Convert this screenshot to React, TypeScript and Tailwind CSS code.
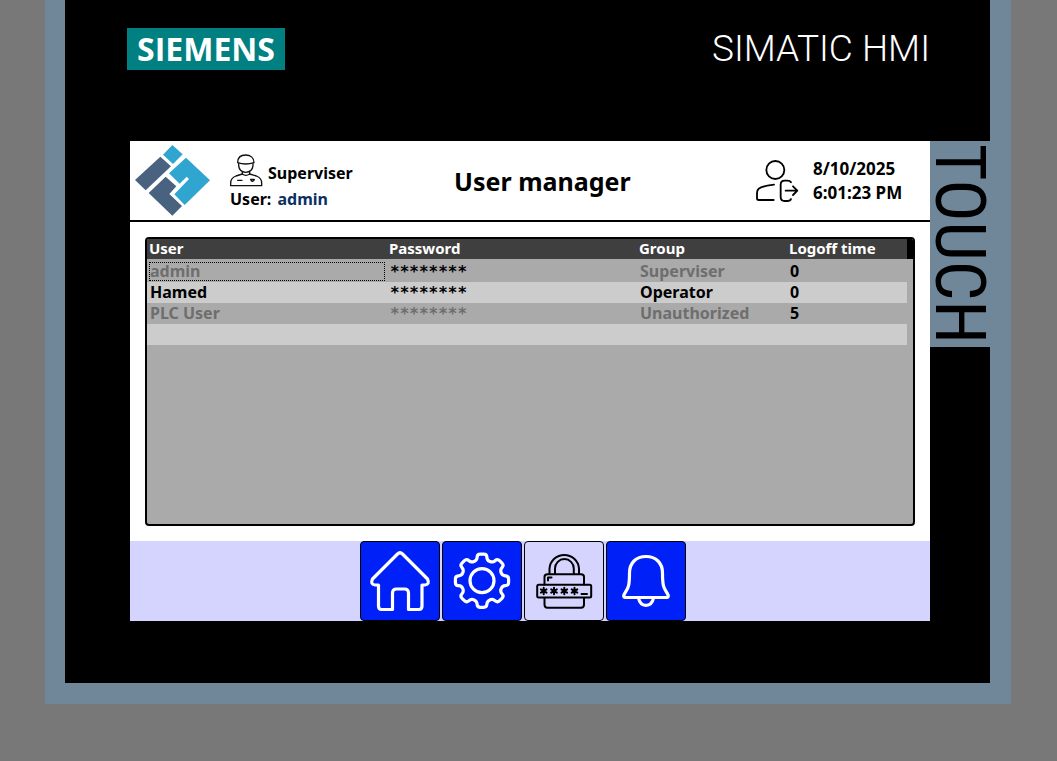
import type { ReactNode } from "react";

type UserRow = {
  name: string;
  group: string;
  logoff: number;
  nameClass: string;
  passwordClass: string;
  selected?: boolean;
};

const users: UserRow[] = [
  { name: "admin", group: "Superviser", logoff: 0, nameClass: "text-[#6e6e6e]", passwordClass: "text-black", selected: true },
  { name: "Hamed", group: "Operator", logoff: 0, nameClass: "text-black", passwordClass: "text-black" },
  { name: "PLC User", group: "Unauthorized", logoff: 5, nameClass: "text-[#6e6e6e]", passwordClass: "text-[#6e6e6e]" },
];

// Closed gear outline: eight teeth with rounded corners.
function gearPath(cx: number, cy: number, outer: number, root: number): string {
  const pts: [number, number][] = [];
  for (let i = 0; i < 8; i++) {
    const corners: [number, number][] = [[-10, outer], [10, outer], [14, root], [31, root]];
    for (const [offset, r] of corners) {
      const a = ((i * 45 - 90 + offset) * Math.PI) / 180;
      pts.push([cx + r * Math.cos(a), cy + r * Math.sin(a)]);
    }
  }
  const n = pts.length;
  const toward = (p: [number, number], q: [number, number]) => {
    const len = Math.hypot(q[0] - p[0], q[1] - p[1]);
    const d = Math.min(3, len / 2);
    return `${(p[0] + ((q[0] - p[0]) * d) / len).toFixed(2)} ${(p[1] + ((q[1] - p[1]) * d) / len).toFixed(2)}`;
  };
  return (
    pts
      .map((p, i) => {
        const prev = pts[(i + n - 1) % n];
        const next = pts[(i + 1) % n];
        return `${i ? "L" : "M"}${toward(p, prev)}Q${p[0].toFixed(2)} ${p[1].toFixed(2)} ${toward(p, next)}`;
      })
      .join("") + "Z"
  );
}

function Logo() {
  return (
    <svg viewBox="30 27 228 216" className="h-[72px] w-[76px] shrink-0" role="img" aria-label="Company logo">
      <path fill="#2fa5cf" d="M142 27 173 55 144 84 114 56Z" />
      <path fill="#48627f" d="M106 62 138 91 62 163 30 132Z" />
      <path fill="#2fa5cf" d="M183 65 255 133 179 207 148 175 192 129 185 122 164 143 132 112Z" />
      <path fill="#48627f" d="M122 122 154 151 133 174 171 210 142 239 71 171Z" />
    </svg>
  );
}

function WorkerIcon() {
  return (
    <svg viewBox="315 57 102 99" className="h-[33px] w-[34px] shrink-0" fill="none" stroke="#111" strokeWidth="4" strokeLinejoin="round" strokeLinecap="round" aria-hidden="true">
      <path d="M338 83C338 68 348 60 362 60S387 68 387 83Q375 87 362 87T338 83Z" />
      <path d="M341 86V92Q343 111 362 112 382 111 384 92V86" />
      <path d="M352 111V117L333 123Q317 129 317 144V152H410V144Q410 129 394 123L374 117V111M352 117Q362 125 374 117" />
      <path d="M338 136H351M377 133H388L386 137 382 139 379 137Z" />
    </svg>
  );
}

function LogoutIcon() {
  return (
    <svg viewBox="49 43 129 126" className="h-[42px] w-[43px]" fill="none" stroke="#000" strokeWidth="5.5" strokeLinecap="round" strokeLinejoin="round" aria-hidden="true">
      <circle cx="107" cy="73" r="27" />
      <path d="M103 117Q71 120 57 129 52 133 52 142V158Q52 163 57 163H102" />
      <path d="M154 110Q151 105 143 105H135Q123 105 123 117V154Q123 166 135 166H143Q152 166 154 160M138 135H172M160 122 173 135 160 148" />
    </svg>
  );
}

const homeIcon = (
  <path d="M37.5 13Q40 10.500 42.500 13L67.500 38Q70 43.500 65 44H62V65Q62 68.500 59 68.500H48.500V52Q48.500 48 44.500 48H36.500Q32.500 48 32.500 52V68.500H21.500Q18.500 68.500 18.500 65V44H15Q10 43.500 12.500 38Z" />
);

const gearIcon = (
  <>
    <path d={gearPath(40, 39.7, 27, 21)} />
    <circle cx="40" cy="39.700" r="12" />
  </>
);

const passwordIcon = (
  <>
    <path d="M25.500 33V27.500A14.800 14.800 0 0 1 55 27.500V33M31 33V27.500A9.400 9.400 0 0 1 49.800 27.500V33" />
    <path d="M20.500 43.500V36Q20.500 33.300 23.500 33.300H57Q60 33.300 60 36V43.500M20.500 57V63.500Q20.500 66.700 23.500 66.700H57Q60 66.700 60 63.500V57M24 39.500V36.500H27.500" />
    <rect x="13.200" y="43.700" width="54" height="12.800" rx="1.500" />
    {[19.7, 30, 40.3, 50.5].map((x) => (
      <path key={x} d={`M${x} 46.800V53.200M${x - 2.8} 48.400L${x + 2.8} 51.600M${x - 2.8} 51.600L${x + 2.8} 48.400`} />
    ))}
    <path d="M57.500 53H63" />
  </>
);

const bellIcon = (
  <>
    <path d="M23.500 32C23.500 22 30 15.500 40 15.500S56.500 22 56.500 32C56.500 46 58 47 61 52Q64 56.500 60 56.500H20Q16 56.500 19 52C22 47 23.500 46 23.500 32Z" />
    <path d="M32.500 57Q34 64.300 40 64.300T47.500 57" />
  </>
);

function NavButton({ label, active, children }: { label: string; active?: boolean; children: ReactNode }) {
  return (
    <button
      type="button"
      aria-label={label}
      aria-current={active ? "page" : undefined}
      className={`size-20 rounded border border-black ${active ? "bg-[#d5d4ff] text-black" : "bg-[#0020f8] text-white"}`}
    >
      <svg viewBox="1 1 78 78" className="size-full" fill="none" stroke="currentColor" strokeWidth={active ? 2 : 3.2} strokeLinecap="round" strokeLinejoin="round" aria-hidden="true">
        {children}
      </svg>
    </button>
  );
}

function UserTable() {
  return (
    <div className="min-h-[289px] overflow-hidden rounded border-2 border-black bg-[#aaaaaa]">
      <table className="w-full table-fixed border-collapse text-left text-base leading-[19px] font-bold">
        <colgroup>
          <col className="w-[240px]" />
          <col className="w-[250px]" />
          <col className="w-[150px]" />
          <col />
          <col className="w-[6px]" />
        </colgroup>
        <thead>
          <tr className="h-5 bg-[#3f3f3f] text-[15px] leading-[18px] text-white">
            {["User", "Password", "Group", "Logoff time"].map((title) => (
              <th key={title} scope="col" className="px-0.5 pt-0 pb-0.5 font-bold">{title}</th>
            ))}
            <td className="bg-black p-0" />
          </tr>
        </thead>
        <tbody>
          <tr aria-hidden="true" className="h-0.5"><td colSpan={5} className="p-0" /></tr>
          {users.map((user) => (
            <tr key={user.name} className="group h-[21px]">
              <td className={`p-0 group-odd:bg-[#cccccc] ${user.nameClass}`}>
                <div className={`mr-0.5 ml-0.5 h-[19px] border border-dotted leading-[17px] ${user.selected ? "border-black" : "border-transparent"}`}>{user.name}</div>
              </td>
              <td className={`px-[3px] py-0 font-['DejaVu_Sans_Mono',monospace] group-odd:bg-[#cccccc] ${user.passwordClass}`}>********</td>
              <td className={`px-[3px] py-0 group-odd:bg-[#cccccc] ${user.nameClass}`}>{user.group}</td>
              <td className="px-[3px] py-0 group-odd:bg-[#cccccc]">{user.logoff}</td>
              <td className="p-0" />
            </tr>
          ))}
          <tr className="h-[21px]">
            <td colSpan={4} className="bg-[#cccccc] p-0" />
            <td className="p-0" />
          </tr>
        </tbody>
      </table>
    </div>
  );
}

export default function App() {
  return (
    <div className="min-h-screen bg-[#787878] pr-[46px] pb-14 pl-[45px] font-['Noto_Sans',sans-serif] text-black">
      <div className="border-r-[21px] border-b-[21px] border-l-[20px] border-[#70879a] bg-black pb-[62px]">
        <div className="flex h-[141px] items-start justify-between pt-7 pr-[60px] pl-[62px]">
          <div className="flex h-[42px] w-[158px] items-center justify-center bg-[#008080] font-['Open_Sans',sans-serif] text-[32px] font-bold text-white">SIEMENS</div>
          <div className="font-['Roboto',sans-serif] text-[37px] leading-[42px] font-light text-white">SIMATIC HMI</div>
        </div>
        <div className="flex items-start pl-[65px]">
          <main className="min-w-0 flex-1 bg-white">
            <header className="flex h-[81px] items-center border-b-2 border-black pr-[25px] pl-[5px] font-bold">
              <Logo />
              <div className="ml-[19px] pt-1">
                <div className="flex items-center gap-1">
                  <WorkerIcon />
                  <span className="pt-1">Superviser</span>
                </div>
                <div className="leading-6">User: <span className="ml-0.5 text-[#0b2f63]">admin</span></div>
              </div>
              <h1 className="flex-1 pr-6 text-center text-[25px] leading-8 font-bold">User manager</h1>
              <button type="button" aria-label="Log out"><LogoutIcon /></button>
              <div className="ml-[14px] w-[92px] text-[17px] leading-6 whitespace-nowrap">
                <div>8/10/2025</div>
                <div>6:01:23 PM</div>
              </div>
            </header>
            <section className="px-[15px] py-[15px]">
              <UserTable />
            </section>
            <nav className="flex justify-center gap-0.5 bg-[#d5d4ff] pr-[14px]">
              <NavButton label="Home">{homeIcon}</NavButton>
              <NavButton label="Settings">{gearIcon}</NavButton>
              <NavButton label="User manager" active>{passwordIcon}</NavButton>
              <NavButton label="Alarms">{bellIcon}</NavButton>
            </nav>
          </main>
          <div className="flex h-[206px] w-[60px] items-center justify-center bg-[#70879a]">
            <span className="font-['Liberation_Sans_Narrow','Roboto_Condensed','Roboto',sans-serif] text-[70px] leading-[60px] [writing-mode:vertical-rl]">TOUCH</span>
          </div>
        </div>
      </div>
    </div>
  );
}
